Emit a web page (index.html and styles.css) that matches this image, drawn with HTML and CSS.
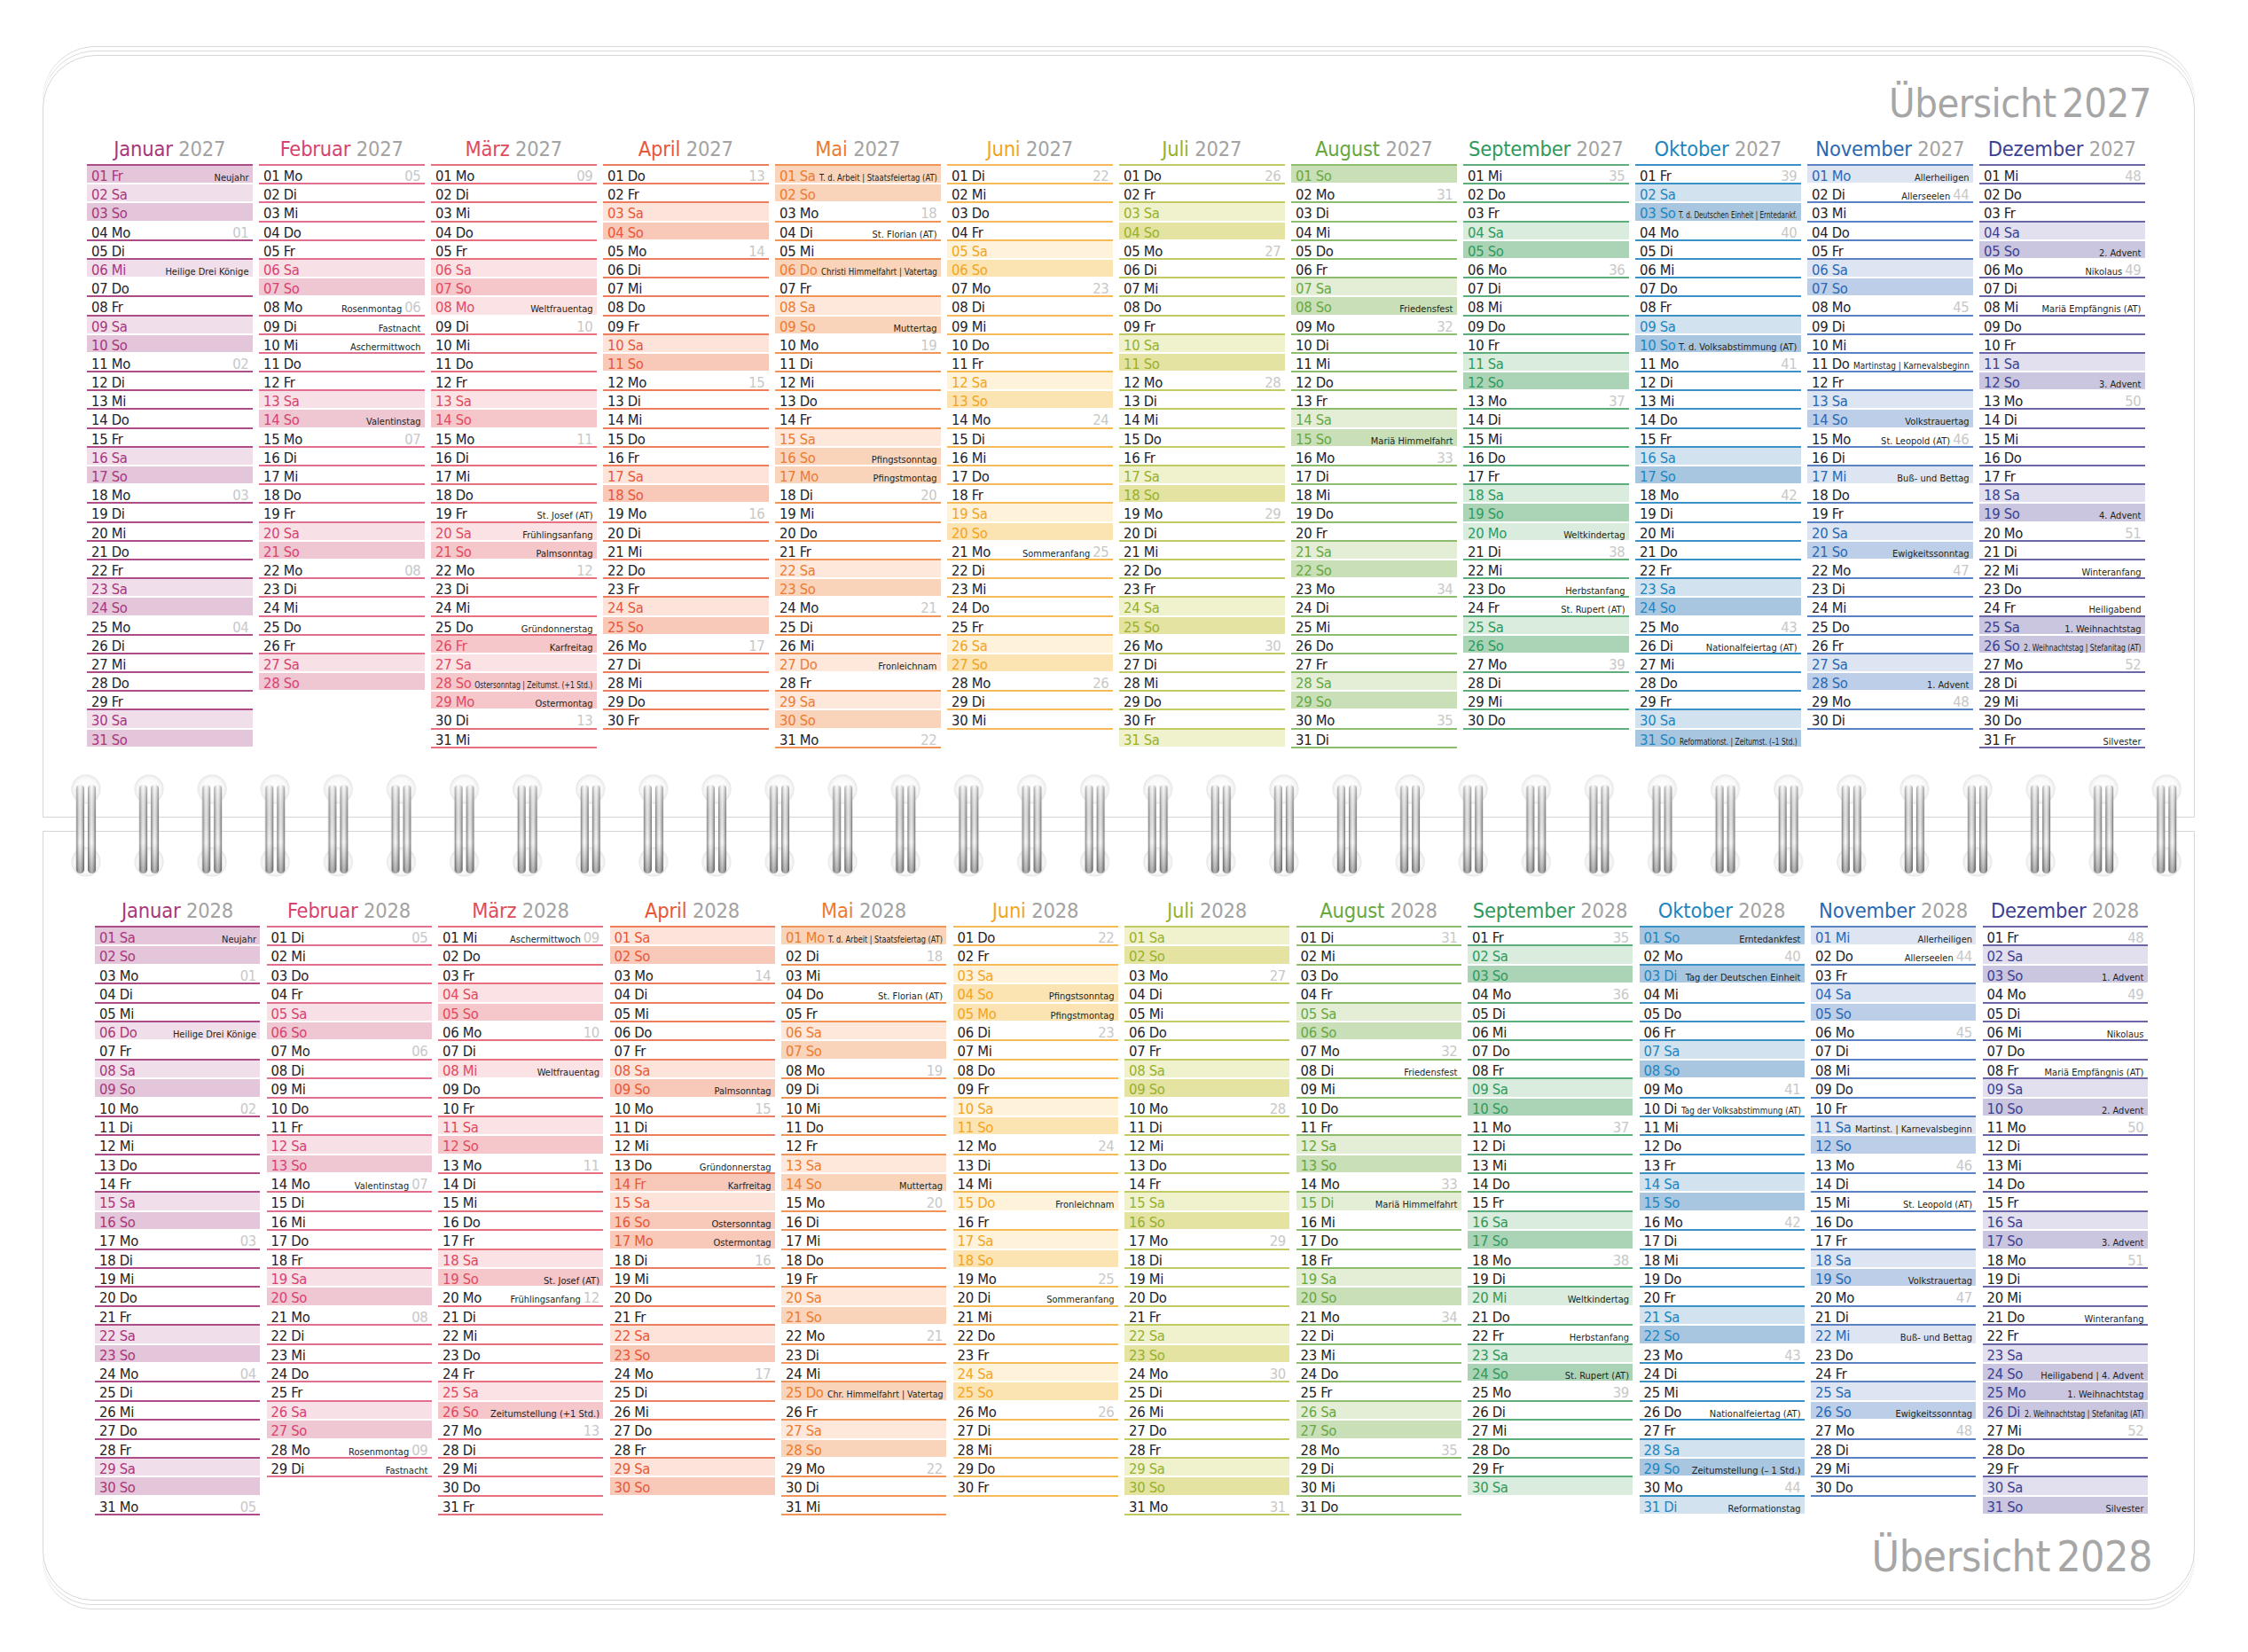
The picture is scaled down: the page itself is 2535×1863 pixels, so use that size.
FILE: index.html
```html
<!DOCTYPE html>
<html lang="de">
<head>
<meta charset="utf-8">
<title>Übersicht 2027 / 2028</title>
<link rel="stylesheet" href="styles.css">
</head>
<body>
<div class="wrap">
  <section class="page page-top">
    <h1 class="title">Übersicht 2027</h1>
    <div class="months" id="y2027"></div>
  </section>
  <section class="page page-bottom">
    <div class="months" id="y2028"></div>
    <h1 class="title">Übersicht 2028</h1>
  </section>
  <svg class="spiral" width="2440" height="125" viewBox="0 0 2440 125" aria-hidden="true">
    <defs>
      <linearGradient id="wire" x1="0" x2="1" y1="0" y2="0">
        <stop offset="0" stop-color="#7e7e7e"/>
        <stop offset="0.3" stop-color="#e4e4e4"/>
        <stop offset="0.5" stop-color="#fafafa"/>
        <stop offset="0.75" stop-color="#cfcfcf"/>
        <stop offset="1" stop-color="#707070"/>
      </linearGradient>
      <linearGradient id="wshade" x1="0" x2="0" y1="0" y2="1">
        <stop offset="0" stop-color="#ffffff" stop-opacity="0.35"/>
        <stop offset="0.65" stop-color="#000000" stop-opacity="0"/>
        <stop offset="1" stop-color="#000000" stop-opacity="0.3"/>
      </linearGradient>
      <radialGradient id="hole" cx="0.5" cy="0.5" r="0.5">
        <stop offset="0" stop-color="#ffffff"/>
        <stop offset="0.75" stop-color="#fafafa"/>
        <stop offset="1" stop-color="#ededed"/>
      </radialGradient>
      <pattern id="ring" x="13.5" y="0" width="71.1" height="125" patternUnits="userSpaceOnUse">
        <circle cx="35.5" cy="20" r="16" fill="url(#hole)" stroke="#e6e6e6" stroke-width="1"/>
        <circle cx="35.5" cy="102" r="16" fill="url(#hole)" stroke="#e6e6e6" stroke-width="1"/>
        <rect x="24.5" y="15" width="9" height="100" rx="4.5" fill="url(#wire)"/>
        <rect x="24.5" y="15" width="9" height="100" rx="4.5" fill="url(#wshade)"/>
        <rect x="37.5" y="15" width="9" height="100" rx="4.5" fill="url(#wire)"/>
        <rect x="37.5" y="15" width="9" height="100" rx="4.5" fill="url(#wshade)"/>
      </pattern>
    </defs>
    <rect x="13.5" y="0" width="2417.4" height="125" fill="url(#ring)"/>
  </svg>
</div>
<script src="script.js"></script>
</body>
</html>
```

FILE: styles.css
```css
* { box-sizing: border-box; }

body {
  margin: 0;
  background: #ffffff;
  font-family: "DejaVu Sans Condensed", "DejaVu Sans", sans-serif;
  font-stretch: condensed;
  color: #262324;
}

.wrap {
  position: relative;
  width: 2535px;
  height: 1863px;
  padding: 62px 0 0 48px;
}

.page {
  position: relative;
  width: 2427px;
  background: #ffffff;
  border: 1px solid #d6d6d6;
}

.page-top {
  height: 860px;
  border-radius: 60px 60px 0 0;
  padding: 29px 48px 0 49px;
  box-shadow: 0 -4px 0 0 #ffffff, 0 -5px 0 0 #dadada, 0 -9px 0 0 #ffffff, 0 -10px 0 0 #dadada;
}

.page-bottom {
  margin-top: 15px;
  height: 868px;
  border-radius: 0 0 56px 56px;
  padding: 72px 47px 0 58px;
  box-shadow: 0 4px 0 0 #ffffff, 0 5px 0 0 #dadada, 0 9px 0 0 #ffffff, 0 10px 0 0 #dadada;
}

.title {
  margin: 0;
  text-align: right;
  font-weight: normal;
  color: #a6a6a6;
  font-size: 45px;
  line-height: 50px;
  letter-spacing: -0.5px;
  word-spacing: -6px;
}

.page-bottom .title {
  font-size: 48px;
  line-height: 54px;
  margin-top: 19px;
}

.months {
  display: grid;
  grid-template-columns: repeat(12, 186.5px);
  column-gap: 7.5px;
}

.page-top .months { margin-top: 9px; }
.page-bottom .months { grid-template-columns: repeat(12, 186px); }

.mhead {
  height: 34px;
  line-height: 34px;
  text-align: center;
  font-size: 23.5px;
  letter-spacing: -0.2px;
  white-space: nowrap;
}

.mn { color: var(--c); }
.yr { color: #a3a3a3; }

.days { border-top: 2px solid var(--ln); }

.day {
  display: flex;
  align-items: baseline;
  height: 21.2px;
  padding: 3px 4px 0 5px;
  border-bottom: 2px solid var(--ln);
  white-space: nowrap;
}

.page-bottom .day { height: 21.4px; }

.day.sa { background: var(--sa); border-bottom-color: #ffffff; color: var(--c); }
.day.so { background: var(--so); border-bottom-color: #ffffff; color: var(--c); }

.lbl {
  flex: none;
  font-size: 16.5px;
  line-height: 17px;
  letter-spacing: -0.3px;
}

.hol {
  flex: 1;
  min-width: 0;
  display: flex;
  justify-content: flex-end;
  margin-left: 4px;
  font-size: 11px;
  line-height: 17px;
  color: #231f20;
}

.hol span {
  flex: none;
  transform-origin: right center;
}

.wk {
  flex: none;
  margin-left: 3px;
  font-size: 16.5px;
  line-height: 17px;
  letter-spacing: -0.3px;
  color: #c8c8c8;
}

.spiral {
  position: absolute;
  left: 48px;
  top: 870px;
  overflow: visible;
}

.m1  { --c: #a8367a; --ln: #ad4d88; --sa: #f0dfea; --so: #e3c6da; }
.m2  { --c: #d8426f; --ln: #e0708e; --sa: #f8e0e7; --so: #efc7d3; }
.m3  { --c: #e14a5d; --ln: #e8707e; --sa: #fbe2e4; --so: #f5c7cb; }
.m4  { --c: #e8573a; --ln: #ee7d60; --sa: #fde4da; --so: #f8c9b8; }
.m5  { --c: #ec7b31; --ln: #f19457; --sa: #fde8db; --so: #f9d4ba; }
.m6  { --c: #f1a521; --ln: #f6bb56; --sa: #fef2da; --so: #fce3b2; }
.m7  { --c: #98b12a; --ln: #c2ca63; --sa: #f0f1cd; --so: #e4e3a2; }
.m8  { --c: #67a83f; --ln: #8dbc6c; --sa: #e4eed7; --so: #c9dfb7; }
.m9  { --c: #2e9a5e; --ln: #5caf7b; --sa: #d9ecdd; --so: #aad4b5; }
.m10 { --c: #1c86c0; --ln: #3a91c6; --sa: #d3e2ef; --so: #a8c6e0; }
.m11 { --c: #2a68b3; --ln: #5a82c3; --sa: #dde5f3; --so: #bdcfe8; }
.m12 { --c: #3d3f92; --ln: #6a66a8; --sa: #e2e0ef; --so: #cac6df; }
```

FILE: script.js
```javascript
(function () {
  var MONTHS = ['Januar', 'Februar', 'März', 'April', 'Mai', 'Juni', 'Juli', 'August', 'September', 'Oktober', 'November', 'Dezember'];
  var WD = ['So', 'Mo', 'Di', 'Mi', 'Do', 'Fr', 'Sa'];

  var H2027 = {
    '01-01': { t: 'Neujahr', s: 'h', nw: 1 },
    '01-06': { t: 'Heilige Drei Könige', s: 'r' },
    '02-08': { t: 'Rosenmontag' },
    '02-09': { t: 'Fastnacht' },
    '02-10': { t: 'Aschermittwoch' },
    '02-14': { t: 'Valentinstag' },
    '03-08': { t: 'Weltfrauentag', s: 'r', mv: 1 },
    '03-19': { t: 'St. Josef (AT)' },
    '03-20': { t: 'Frühlingsanfang' },
    '03-21': { t: 'Palmsonntag' },
    '03-25': { t: 'Gründonnerstag' },
    '03-26': { t: 'Karfreitag', s: 'h' },
    '03-28': { t: 'Ostersonntag | Zeitumst. (+1 Std.)' },
    '03-29': { t: 'Ostermontag', s: 'h', mv: 1 },
    '05-01': { t: 'T. d. Arbeit | Staatsfeiertag (AT)', s: 'h' },
    '05-04': { t: 'St. Florian (AT)' },
    '05-06': { t: 'Christi Himmelfahrt | Vatertag', s: 'h' },
    '05-09': { t: 'Muttertag' },
    '05-16': { t: 'Pfingstsonntag' },
    '05-17': { t: 'Pfingstmontag', s: 'h', mv: 1 },
    '05-27': { t: 'Fronleichnam', s: 'r' },
    '06-21': { t: 'Sommeranfang' },
    '08-08': { t: 'Friedensfest' },
    '08-15': { t: 'Mariä Himmelfahrt' },
    '09-20': { t: 'Weltkindertag', s: 'r', mv: 1 },
    '09-23': { t: 'Herbstanfang' },
    '09-24': { t: 'St. Rupert (AT)' },
    '10-03': { t: 'T. d. Deutschen Einheit | Erntedankf.' },
    '10-10': { t: 'T. d. Volksabstimmung (AT)' },
    '10-26': { t: 'Nationalfeiertag (AT)' },
    '10-31': { t: 'Reformationst. | Zeitumst. (–1 Std.)' },
    '11-01': { t: 'Allerheiligen', s: 'r', mv: 1 },
    '11-02': { t: 'Allerseelen' },
    '11-11': { t: 'Martinstag | Karnevalsbeginn' },
    '11-14': { t: 'Volkstrauertag' },
    '11-15': { t: 'St. Leopold (AT)' },
    '11-17': { t: 'Buß- und Bettag', s: 'r' },
    '11-21': { t: 'Ewigkeitssonntag' },
    '11-28': { t: '1. Advent' },
    '12-05': { t: '2. Advent' },
    '12-06': { t: 'Nikolaus' },
    '12-08': { t: 'Mariä Empfängnis (AT)' },
    '12-12': { t: '3. Advent' },
    '12-19': { t: '4. Advent' },
    '12-22': { t: 'Winteranfang' },
    '12-24': { t: 'Heiligabend' },
    '12-25': { t: '1. Weihnachtstag', s: 'h' },
    '12-26': { t: '2. Weihnachtstag | Stefanitag (AT)', s: 'h' },
    '12-31': { t: 'Silvester' }
  };

  var H2028 = {
    '01-01': { t: 'Neujahr', s: 'h', nw: 1 },
    '01-06': { t: 'Heilige Drei Könige', s: 'r' },
    '02-14': { t: 'Valentinstag' },
    '02-28': { t: 'Rosenmontag' },
    '02-29': { t: 'Fastnacht' },
    '03-01': { t: 'Aschermittwoch' },
    '03-08': { t: 'Weltfrauentag', s: 'r' },
    '03-19': { t: 'St. Josef (AT)' },
    '03-20': { t: 'Frühlingsanfang' },
    '03-26': { t: 'Zeitumstellung (+1 Std.)' },
    '04-09': { t: 'Palmsonntag' },
    '04-13': { t: 'Gründonnerstag' },
    '04-14': { t: 'Karfreitag', s: 'h' },
    '04-16': { t: 'Ostersonntag' },
    '04-17': { t: 'Ostermontag', s: 'h', mv: 1 },
    '05-01': { t: 'T. d. Arbeit | Staatsfeiertag (AT)', s: 'h', mv: 1 },
    '05-04': { t: 'St. Florian (AT)' },
    '05-14': { t: 'Muttertag' },
    '05-25': { t: 'Chr. Himmelfahrt | Vatertag', s: 'h' },
    '06-04': { t: 'Pfingstsonntag' },
    '06-05': { t: 'Pfingstmontag', s: 'h', mv: 1 },
    '06-15': { t: 'Fronleichnam', s: 'r' },
    '06-20': { t: 'Sommeranfang' },
    '08-08': { t: 'Friedensfest' },
    '08-15': { t: 'Mariä Himmelfahrt', s: 'r' },
    '09-20': { t: 'Weltkindertag', s: 'r' },
    '09-22': { t: 'Herbstanfang' },
    '09-24': { t: 'St. Rupert (AT)' },
    '10-01': { t: 'Erntedankfest' },
    '10-03': { t: 'Tag der Deutschen Einheit', s: 'h' },
    '10-10': { t: 'Tag der Volksabstimmung (AT)' },
    '10-26': { t: 'Nationalfeiertag (AT)' },
    '10-29': { t: 'Zeitumstellung (– 1 Std.)' },
    '10-31': { t: 'Reformationstag', s: 'r' },
    '11-01': { t: 'Allerheiligen', s: 'r', mv: 1 },
    '11-02': { t: 'Allerseelen' },
    '11-11': { t: 'Martinst. | Karnevalsbeginn' },
    '11-15': { t: 'St. Leopold (AT)' },
    '11-19': { t: 'Volkstrauertag' },
    '11-22': { t: 'Buß- und Bettag', s: 'r' },
    '11-26': { t: 'Ewigkeitssonntag' },
    '12-03': { t: '1. Advent' },
    '12-06': { t: 'Nikolaus' },
    '12-08': { t: 'Mariä Empfängnis (AT)' },
    '12-10': { t: '2. Advent' },
    '12-17': { t: '3. Advent' },
    '12-21': { t: 'Winteranfang' },
    '12-24': { t: 'Heiligabend | 4. Advent' },
    '12-25': { t: '1. Weihnachtstag', s: 'h', mv: 1 },
    '12-26': { t: '2. Weihnachtstag | Stefanitag (AT)', s: 'h', mv: 1 },
    '12-31': { t: 'Silvester' }
  };

  function pad(n) { return (n < 10 ? '0' : '') + n; }

  function isoWeek(y, m, d) {
    var t = new Date(Date.UTC(y, m, d));
    var dayNum = (t.getUTCDay() + 6) % 7;
    t.setUTCDate(t.getUTCDate() - dayNum + 3);
    var firstThu = new Date(Date.UTC(t.getUTCFullYear(), 0, 4));
    var diff = (t - firstThu) / 86400000;
    return 1 + Math.round((diff - 3 + ((firstThu.getUTCDay() + 6) % 7)) / 7);
  }

  function el(tag, cls, text) {
    var e = document.createElement(tag);
    if (cls) e.className = cls;
    if (text != null) e.textContent = text;
    return e;
  }

  function build(year, hol, id) {
    var root = document.getElementById(id);
    for (var m = 0; m < 12; m++) {
      var col = el('div', 'month m' + (m + 1));
      var head = el('div', 'mhead');
      head.appendChild(el('span', 'mn', MONTHS[m]));
      head.appendChild(document.createTextNode(' '));
      head.appendChild(el('span', 'yr', String(year)));
      col.appendChild(head);
      var days = el('div', 'days');
      var nd = new Date(year, m + 1, 0).getDate();
      var pending = null;
      for (var d = 1; d <= nd; d++) {
        var dow = new Date(year, m, d).getDay();
        var h = hol[pad(m + 1) + '-' + pad(d)];
        var cls = '';
        if (dow === 6) cls = 'sa';
        if (dow === 0) cls = 'so';
        if (h && h.s === 'h') cls = 'so';
        if (h && h.s === 'r' && !cls) cls = 'sa';

        var showWeek = dow === 1 || (d === 1 && dow >= 2 && dow <= 5);
        if (h && h.nw) showWeek = false;
        var wk = null;
        if (pending !== null) {
          if (!(h && h.mv)) { wk = pending; pending = null; }
        }
        if (showWeek) {
          var wn = isoWeek(year, m, d);
          if (h && h.mv) pending = wn; else wk = wn;
        }

        var row = el('div', 'day' + (cls ? ' ' + cls : ''));
        row.appendChild(el('span', 'lbl', pad(d) + ' ' + WD[dow]));
        var hb = el('span', 'hol');
        if (h) hb.appendChild(el('span', null, h.t));
        row.appendChild(hb);
        if (wk !== null) row.appendChild(el('span', 'wk', pad(wk)));
        days.appendChild(row);
      }
      col.appendChild(days);
      root.appendChild(col);
    }
  }

  build(2027, H2027, 'y2027');
  build(2028, H2028, 'y2028');

  var spans = document.querySelectorAll('.hol > span');
  for (var i = 0; i < spans.length; i++) {
    var s = spans[i];
    var avail = s.parentElement.clientWidth;
    var w = s.offsetWidth;
    if (w > avail && avail > 0) {
      s.style.transform = 'scaleX(' + (avail / w).toFixed(3) + ')';
    }
  }
})();
```
